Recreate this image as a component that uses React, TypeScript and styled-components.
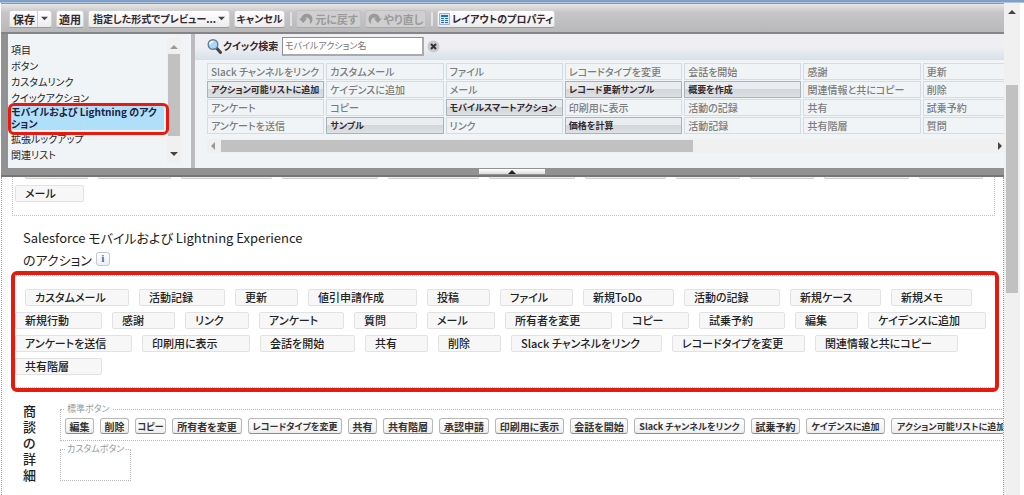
import React from "react";
import styled, { createGlobalStyle, css } from "styled-components";

const GlobalStyle = createGlobalStyle`
  * { box-sizing: border-box; }
  body {
    margin: 0;
    background: #fff;
    color: #222;
    font-family: "Noto Sans CJK JP", "Liberation Sans", sans-serif;
    font-size: 10px;
    font-feature-settings: "palt" 1;
  }
  button, input {
    font-family: inherit;
    font-feature-settings: inherit;
    margin: 0;
  }
`;

const Page = styled.div`
  display: flex;
  flex-direction: column;
  height: 100vh;
  overflow: hidden;
`;

const TopStrip = styled.div`
  flex: none;
  height: 3px;
  background: #7ba2cf;
  border-bottom: 1px solid #b9c4d2;
`;

const Frame = styled.div`
  flex: 1;
  min-height: 0;
  display: flex;
  padding-right: 4px;
`;

const Editor = styled.main`
  flex: 1;
  min-width: 0;
  display: flex;
  flex-direction: column;
  padding-left: 1px;
`;

const PageScroll = styled.div`
  flex: none;
  width: 16px;
  background: #f0f0f0;
  display: flex;
  flex-direction: column;
  align-items: center;
  padding-top: 5px;
`;

const PageThumb = styled.div`
  width: 12px;
  height: 208px;
  margin-top: 69px;
  background: #c1c1c1;
`;

const Toolbar = styled.div`
  flex: none;
  display: flex;
  align-items: center;
  gap: 4px;
  height: 31px;
  padding: 1px 8px 0;
  background: linear-gradient(#e6e6e6, #c6c6c8 30%, #b8b8ba);
  border-top: 1px solid #9a9494;
  border-bottom: 2px solid #858585;
`;

const ToolButton = styled.button<{ $w: number; $dense?: boolean }>`
  flex: none;
  display: flex;
  align-items: center;
  justify-content: center;
  gap: 2px;
  width: ${(p) => p.$w}px;
  height: 18px;
  padding: 0;
  border: 1px solid #d2d2d2;
  border-bottom-color: #9c9c9c;
  border-radius: 3px;
  background: linear-gradient(#fff, #ececec);
  color: #33292f;
  font-size: ${(p) => (p.$dense ? 10 : 11)}px;
  line-height: 16px;
  font-weight: 700;
  white-space: nowrap;
  &:disabled {
    background: #cfcfcf;
    border-color: #c2c2c2;
    border-bottom-color: #a8a8a8;
    color: #9b9b9b;
  }
`;

const SplitMark = styled.span`
  display: flex;
  align-items: center;
  height: 16px;
  padding-left: 3px;
  border-left: 1px solid #ccc;
`;

const Divider = styled.span`
  width: 2px;
  height: 14px;
  margin-left: 1px;
  background: #e2e2e2;
`;

const Palette = styled.div`
  flex: none;
  display: flex;
  height: 134px;
  padding-left: 7px;
  background: #929292;
`;

const Side = styled.div`
  position: relative;
  flex: none;
  display: flex;
  width: 187px;
  padding: 4px 10px 5px 2px;
  background: #f0f4f7;
  border-right: 4px solid #bcbcbf;
`;

const CategoryList = styled.ul`
  flex: 1;
  margin: 0;
  padding: 4px 0 0;
  list-style: none;
`;

const Category = styled.li<{ $on?: boolean }>`
  padding-left: 1px;
  line-height: 16px;
  white-space: nowrap;
  ${(p) =>
    p.$on &&
    css`
      margin: 0 3px 1px 0;
      line-height: 12px;
      font-weight: 700;
      color: #1d2340;
      background: #b0dff9;
      white-space: normal;
    `}
`;

const SideScroll = styled.div`
  flex: none;
  width: 14px;
  display: flex;
  flex-direction: column;
  align-items: center;
  justify-content: space-between;
  padding: 5px 0;
  background: #f0f0f0;
`;

const SideThumb = styled.div`
  width: 12px;
  height: 82px;
  margin: 3px 0 auto;
  background: #c1c1c1;
`;

const CategoryMark = styled.div`
  position: absolute;
  left: 0;
  top: 69px;
  width: 161px;
  height: 32px;
  border: 3px solid #e8190f;
  border-radius: 6px;
`;

const Finder = styled.div`
  flex: 1;
  min-width: 0;
  display: flex;
  flex-direction: column;
  background: #f0f4f7;
`;

const SearchBar = styled.div`
  flex: none;
  display: flex;
  align-items: center;
  height: 26px;
  padding: 0 0 2px 12px;
  background: linear-gradient(#efeff3 50%, #d7e0ea);
`;

const SearchLabel = styled.label`
  width: 60px;
  padding-left: 1px;
  color: #33292f;
  font-size: 10px;
  line-height: 16px;
  font-weight: 700;
  white-space: nowrap;
`;

const SearchInput = styled.input`
  width: 142px;
  height: 19px;
  padding: 0 2px;
  border: 1px solid #999;
  border-width: 1px 2px 2px 1px;
  border-color: #8e8e8e #aaa #aaa #8e8e8e;
  background: #fff;
  font-size: 9px;
  &::placeholder { color: #777; }
`;

const ClearButton = styled.button`
  display: flex;
  margin-left: 3px;
  padding: 0;
  border: 0;
  background: none;
`;

const ItemArea = styled.div`
  overflow: hidden;
  padding: 3px 0 5px 12px;
`;

const ItemGrid = styled.div`
  display: grid;
  grid-template-columns: repeat(7, 1fr);
  gap: 1px 2px;
  width: 833px;
`;

const Item = styled.button`
  min-width: 0;
  height: 17px;
  padding: 0 3px;
  overflow: hidden;
  border: 1px solid #a9b3bb;
  background: linear-gradient(#e9edf0 45%, #d3d7db 50%, #dde1e4);
  color: #33292f;
  font-size: 9px;
  line-height: 15px;
  font-weight: 700;
  text-align: left;
  white-space: nowrap;
  &:disabled {
    border-color: #d3dde3;
    background: #f0f4f7;
    color: #7c7c7c;
    font-size: 10px;
    font-weight: 500;
  }
`;

const ItemScroll = styled.div`
  flex: none;
  display: flex;
  align-items: center;
  height: 14px;
  margin-left: 12px;
  padding: 0 0 0 2px;
  background: #f0f0f0;
`;

const ItemThumb = styled.div`
  width: 472px;
  height: 12px;
  margin: 0 auto 0 4px;
  background: #c1c1c1;
`;

const Collapse = styled.div`
  flex: none;
  display: flex;
  justify-content: center;
  height: 9px;
  padding: 1px 0 0 18px;
  background: #929292;
  border-bottom: 2px solid #767676;
`;

const CollapseButton = styled.button`
  display: flex;
  align-items: center;
  justify-content: center;
  width: 66px;
  height: 5px;
  padding: 0;
  border: 0;
  background: linear-gradient(#fff, #ddd);
`;

const Canvas = styled.div`
  flex: 1;
  min-height: 0;
  overflow: hidden;
  border: 1px dotted #999;
  border-width: 0 1px;
`;

const QuickZone = styled.div`
  height: 39px;
  margin: 0 8px 0 10px;
  padding-left: 2px;
  border: 1px dotted #c4c4c4;
  border-top: 0;
`;

const CutRow = styled.div`
  display: flex;
  gap: 10px;
  height: 2px;
  margin-bottom: 6px;
  padding-left: 10px;
`;

const CutChip = styled.span<{ $w: number }>`
  flex: none;
  width: ${(p) => p.$w}px;
  height: 2px;
  border: 1px solid #ccc;
  border-top: 0;
  border-radius: 0 0 2px 2px;
  background: #f0f0f0;
`;

const Chip = styled.div<{ $w: number }>`
  flex: none;
  width: ${(p) => p.$w}px;
  height: 17px;
  padding-left: 9px;
  border: 1px solid #e2e2e2;
  border-radius: 2px;
  background: #f7f7f7;
  font-size: 11px;
  line-height: 14px;
  font-weight: 500;
  white-space: nowrap;
`;

const ZoneHead = styled.div`
  display: flex;
  align-items: flex-end;
  margin: 11px 0 0 21px;
`;

const ZoneTitle = styled.h2`
  margin: 0;
  color: #222;
  font-size: 13px;
  line-height: 22px;
  font-weight: 400;
`;

const TitleEnd = styled.span`
  display: flex;
  align-items: center;
  gap: 4px;
`;

const InfoButton = styled.button`
  width: 14px;
  height: 14px;
  margin-bottom: 3px;
  padding: 0;
  border: 1px solid #c4c8cc;
  border-radius: 3px;
  background: linear-gradient(#fff, #eceff2);
  color: #1a73c8;
  font-family: "Liberation Serif", serif;
  font-size: 11px;
  line-height: 11px;
  font-weight: 700;
`;

const MobileZone = styled.section`
  margin: 0 4px 0 9px;
  border: 4px solid #e8190f;
  border-radius: 6px;
`;

const ZoneInner = styled.div`
  display: flex;
  flex-direction: column;
  gap: 6px;
  padding: 13px 0 12px;
  border: 1px dotted #c4c4c4;
  border-width: 1px 0;
`;

const ChipRow = styled.div<{ $lead?: boolean }>`
  display: flex;
  gap: 10px;
  padding-left: ${(p) => (p.$lead ? 10 : 0)}px;
`;

const Detail = styled.section`
  display: flex;
  padding: 11px 0 0 21px;
`;

const DetailTitle = styled.h2`
  flex: none;
  width: 13px;
  margin: 0 24px 0 0;
  font-size: 13px;
  line-height: 16px;
  font-weight: 500;
  word-break: break-all;
`;

const Groups = styled.div`
  flex: 1;
  min-width: 0;
  overflow: hidden;
  display: flex;
  flex-direction: column;
  align-items: flex-start;
  gap: 2px;
`;

const Group = styled.fieldset<{ $wide?: boolean }>`
  display: flex;
  gap: 6px;
  min-width: 66px;
  width: ${(p) => (p.$wide ? "1100px" : "auto")};
  height: 38px;
  margin: 0;
  padding: 3px 4px 0;
  border: 1px dotted #b8b8b8;
`;

const GroupName = styled.legend`
  padding: 0 2px;
  color: #999;
  font-size: 9px;
  line-height: 12px;
`;

const DetailButton = styled.button<{ $w: number; $dense?: boolean }>`
  flex: none;
  width: ${(p) => p.$w}px;
  height: 16px;
  padding: 0;
  border: 1px solid #b8b8b8;
  border-bottom-color: #8c8c8c;
  border-radius: 3px;
  background: linear-gradient(#fff, #eee);
  color: #333;
  font-size: ${(p) => (p.$dense ? 9 : 10)}px;
  line-height: 13px;
  font-weight: 700;
  white-space: nowrap;
`;

type Dir = "up" | "down" | "left" | "right";

const arrowPaths: Record<Dir, string> = {
  up: "M0 6 4 2l4 4z",
  down: "M0 2h8L4 6z",
  left: "M6 0v8L2 4z",
  right: "M2 0v8l4-4z",
};

const Arrow = ({ dir, color = "#444", size = 8 }: { dir: Dir; color?: string; size?: number }) => (
  <svg width={size} height={size} viewBox="0 0 8 8" aria-hidden="true">
    <path d={arrowPaths[dir]} fill={color} />
  </svg>
);

const UndoIcon = ({ flip }: { flip?: boolean }) => (
  <svg width="14" height="13" viewBox="0 0 14 13" aria-hidden="true">
    <g transform={flip ? "translate(14 0) scale(-1 1)" : undefined}>
      <path
        d="M0 6.500h2.200C2.700 3.300 5 1.800 7.800 1.800c3.400 0 5.700 2.300 5.700 5.400 0 2.300-1 3.900-3 4.800.7-1.200.8-2.600.3-3.900C10.200 6.500 9 5.600 7.800 5.600c-1 0-1.600.3-1.900.9h2.300L4.200 11z"
        fill="#999"
      />
    </g>
  </svg>
);

const LayoutIcon = () => (
  <svg width="11" height="12" viewBox="0 0 11 12" aria-hidden="true">
    <path d="M.5.5h10v11H.5z" fill="#dfe9f3" stroke="#a5b4c3" />
    <path d="M2 2h7v2H2zM2 5h3v1H2zM6 5h3v1H6zM2 7h3v1H2zM6 7h3v1H6zM2 9h3v1H2zM6 9h3v1H6z" fill="#1f71c4" />
  </svg>
);

const SearchIcon = () => (
  <svg width="15" height="16" viewBox="0 0 15 16" aria-hidden="true">
    <path d="m9.500 10 4 4.500" stroke="#444" strokeWidth="3" strokeLinecap="round" />
    <circle cx="6" cy="6.500" r="4.800" fill="#a8d8f4" stroke="#5f7f9a" strokeWidth="1.400" />
    <path d="M3 6.500C3 4.500 4.500 3.500 6.500 3.500" stroke="#fff" strokeWidth="1.500" fill="none" />
  </svg>
);

const ClearIcon = () => (
  <svg width="13" height="13" viewBox="0 0 13 13" aria-hidden="true">
    <circle cx="6.500" cy="6.500" r="6" fill="#c9cccc" />
    <path d="m4 4 5 5M9 4 4 9" stroke="#333" strokeWidth="2" />
  </svg>
);

const items: [string, boolean?][] = [
  ["Slack チャンネルをリンク"], ["カスタムメール"], ["ファイル"], ["レコードタイプを変更"], ["会話を開始"], ["感謝"], ["更新"],
  ["アクション可能リストに追加", true], ["ケイデンスに追加"], ["メール"], ["レコード更新サンプル", true], ["概要を作成", true], ["関連情報と共にコピー"], ["削除"],
  ["アンケート"], ["コピー"], ["モバイルスマートアクション", true], ["印刷用に表示"], ["活動の記録"], ["共有"], ["試乗予約"],
  ["アンケートを送信"], ["サンプル", true], ["リンク"], ["価格を計算", true], ["活動記録"], ["共有階層"], ["質問"],
];

const chipRows: [string, number][][] = [
  [["カスタムメール", 104], ["活動記録", 86], ["更新", 63], ["値引申請作成", 109], ["投稿", 63], ["ファイル", 73], ["新規ToDo", 91], ["活動の記録", 96], ["新規ケース", 91], ["新規メモ", 81]],
  [["新規行動", 87], ["感謝", 63], ["リンク", 64], ["アンケート", 85], ["質問", 63], ["メール", 68], ["所有者を変更", 107], ["コピー", 67], ["試乗予約", 86], ["編集", 63], ["ケイデンスに追加", 118]],
  [["アンケートを送信", 117], ["印刷用に表示", 108], ["会話を開始", 95], ["共有", 63], ["削除", 63], ["Slack チャンネルをリンク", 151], ["レコードタイプを変更", 133], ["関連情報と共にコピー", 143]],
  [["共有階層", 87]],
];

const detailButtons: [string, number, boolean?][] = [
  ["編集", 29], ["削除", 29], ["コピー", 31, true], ["所有者を変更", 70], ["レコードタイプを変更", 94, true], ["共有", 29], ["共有階層", 50],
  ["承認申請", 50], ["印刷用に表示", 69], ["会話を開始", 58], ["Slack チャンネルをリンク", 111, true], ["試乗予約", 49], ["ケイデンスに追加", 79, true], ["アクション可能リストに追加", 120, true],
];

const cutWidths = [63, 73, 91, 96, 91, 86, 81, 64, 64, 85, 64];

export default function App() {
  return (
    <Page>
      <GlobalStyle />
      <TopStrip />
      <Frame>
        <Editor>
          <Toolbar>
            <ToolButton $w={43}>保存<SplitMark><Arrow dir="down" size={7} /></SplitMark></ToolButton>
            <ToolButton $w={28}>適用</ToolButton>
            <ToolButton $w={142} $dense>指定した形式でプレビュー...<Arrow dir="down" size={7} /></ToolButton>
            <ToolButton $w={51} $dense>キャンセル</ToolButton>
            <Divider />
            <ToolButton $w={65} disabled><UndoIcon />元に戻す</ToolButton>
            <ToolButton $w={61} disabled><UndoIcon flip />やり直し</ToolButton>
            <Divider />
            <ToolButton $w={118} $dense><LayoutIcon />レイアウトのプロパティ</ToolButton>
          </Toolbar>
          <Palette>
            <Side>
              <CategoryList>
                <Category>項目</Category>
                <Category>ボタン</Category>
                <Category>カスタムリンク</Category>
                <Category>クイックアクション</Category>
                <Category $on>モバイルおよび Lightning のアクション</Category>
                <Category>拡張ルックアップ</Category>
                <Category>関連リスト</Category>
              </CategoryList>
              <SideScroll>
                <Arrow dir="up" color="#999" />
                <SideThumb />
                <Arrow dir="down" />
              </SideScroll>
              <CategoryMark />
            </Side>
            <Finder>
              <SearchBar>
                <SearchIcon />
                <SearchLabel htmlFor="quick">クイック検索</SearchLabel>
                <SearchInput id="quick" placeholder="モバイルアクション名" />
                <ClearButton aria-label="クリア"><ClearIcon /></ClearButton>
              </SearchBar>
              <ItemArea>
                <ItemGrid>
                  {items.map(([name, free]) => (
                    <Item key={name} disabled={!free}>{name}</Item>
                  ))}
                </ItemGrid>
              </ItemArea>
              <ItemScroll>
                <Arrow dir="left" color="#999" />
                <ItemThumb />
                <Arrow dir="right" />
              </ItemScroll>
            </Finder>
          </Palette>
          <Collapse>
            <CollapseButton aria-label="折りたたむ"><Arrow dir="up" color="#222" /></CollapseButton>
          </Collapse>
          <Canvas>
            <QuickZone>
              <CutRow>
                {cutWidths.map((w, i) => (
                  <CutChip key={i} $w={w} />
                ))}
              </CutRow>
              <Chip $w={69}>メール</Chip>
            </QuickZone>
            <ZoneHead>
              <ZoneTitle>
                Salesforce モバイルおよび Lightning Experience
                <TitleEnd>
                  のアクション
                  <InfoButton>i</InfoButton>
                </TitleEnd>
              </ZoneTitle>
            </ZoneHead>
            <MobileZone>
              <ZoneInner>
                {chipRows.map((row, i) => (
                  <ChipRow key={i} $lead={i === 0}>
                    {row.map(([name, w]) => (
                      <Chip key={name} $w={w}>{name}</Chip>
                    ))}
                  </ChipRow>
                ))}
              </ZoneInner>
            </MobileZone>
            <Detail>
              <DetailTitle>商談の詳細</DetailTitle>
              <Groups>
                <Group $wide>
                  <GroupName>標準ボタン</GroupName>
                  {detailButtons.map(([name, w, dense]) => (
                    <DetailButton key={name} $w={w} $dense={dense}>{name}</DetailButton>
                  ))}
                </Group>
                <Group>
                  <GroupName>カスタムボタン</GroupName>
                </Group>
              </Groups>
            </Detail>
          </Canvas>
        </Editor>
        <PageScroll>
          <Arrow dir="up" />
          <PageThumb />
        </PageScroll>
      </Frame>
    </Page>
  );
}
